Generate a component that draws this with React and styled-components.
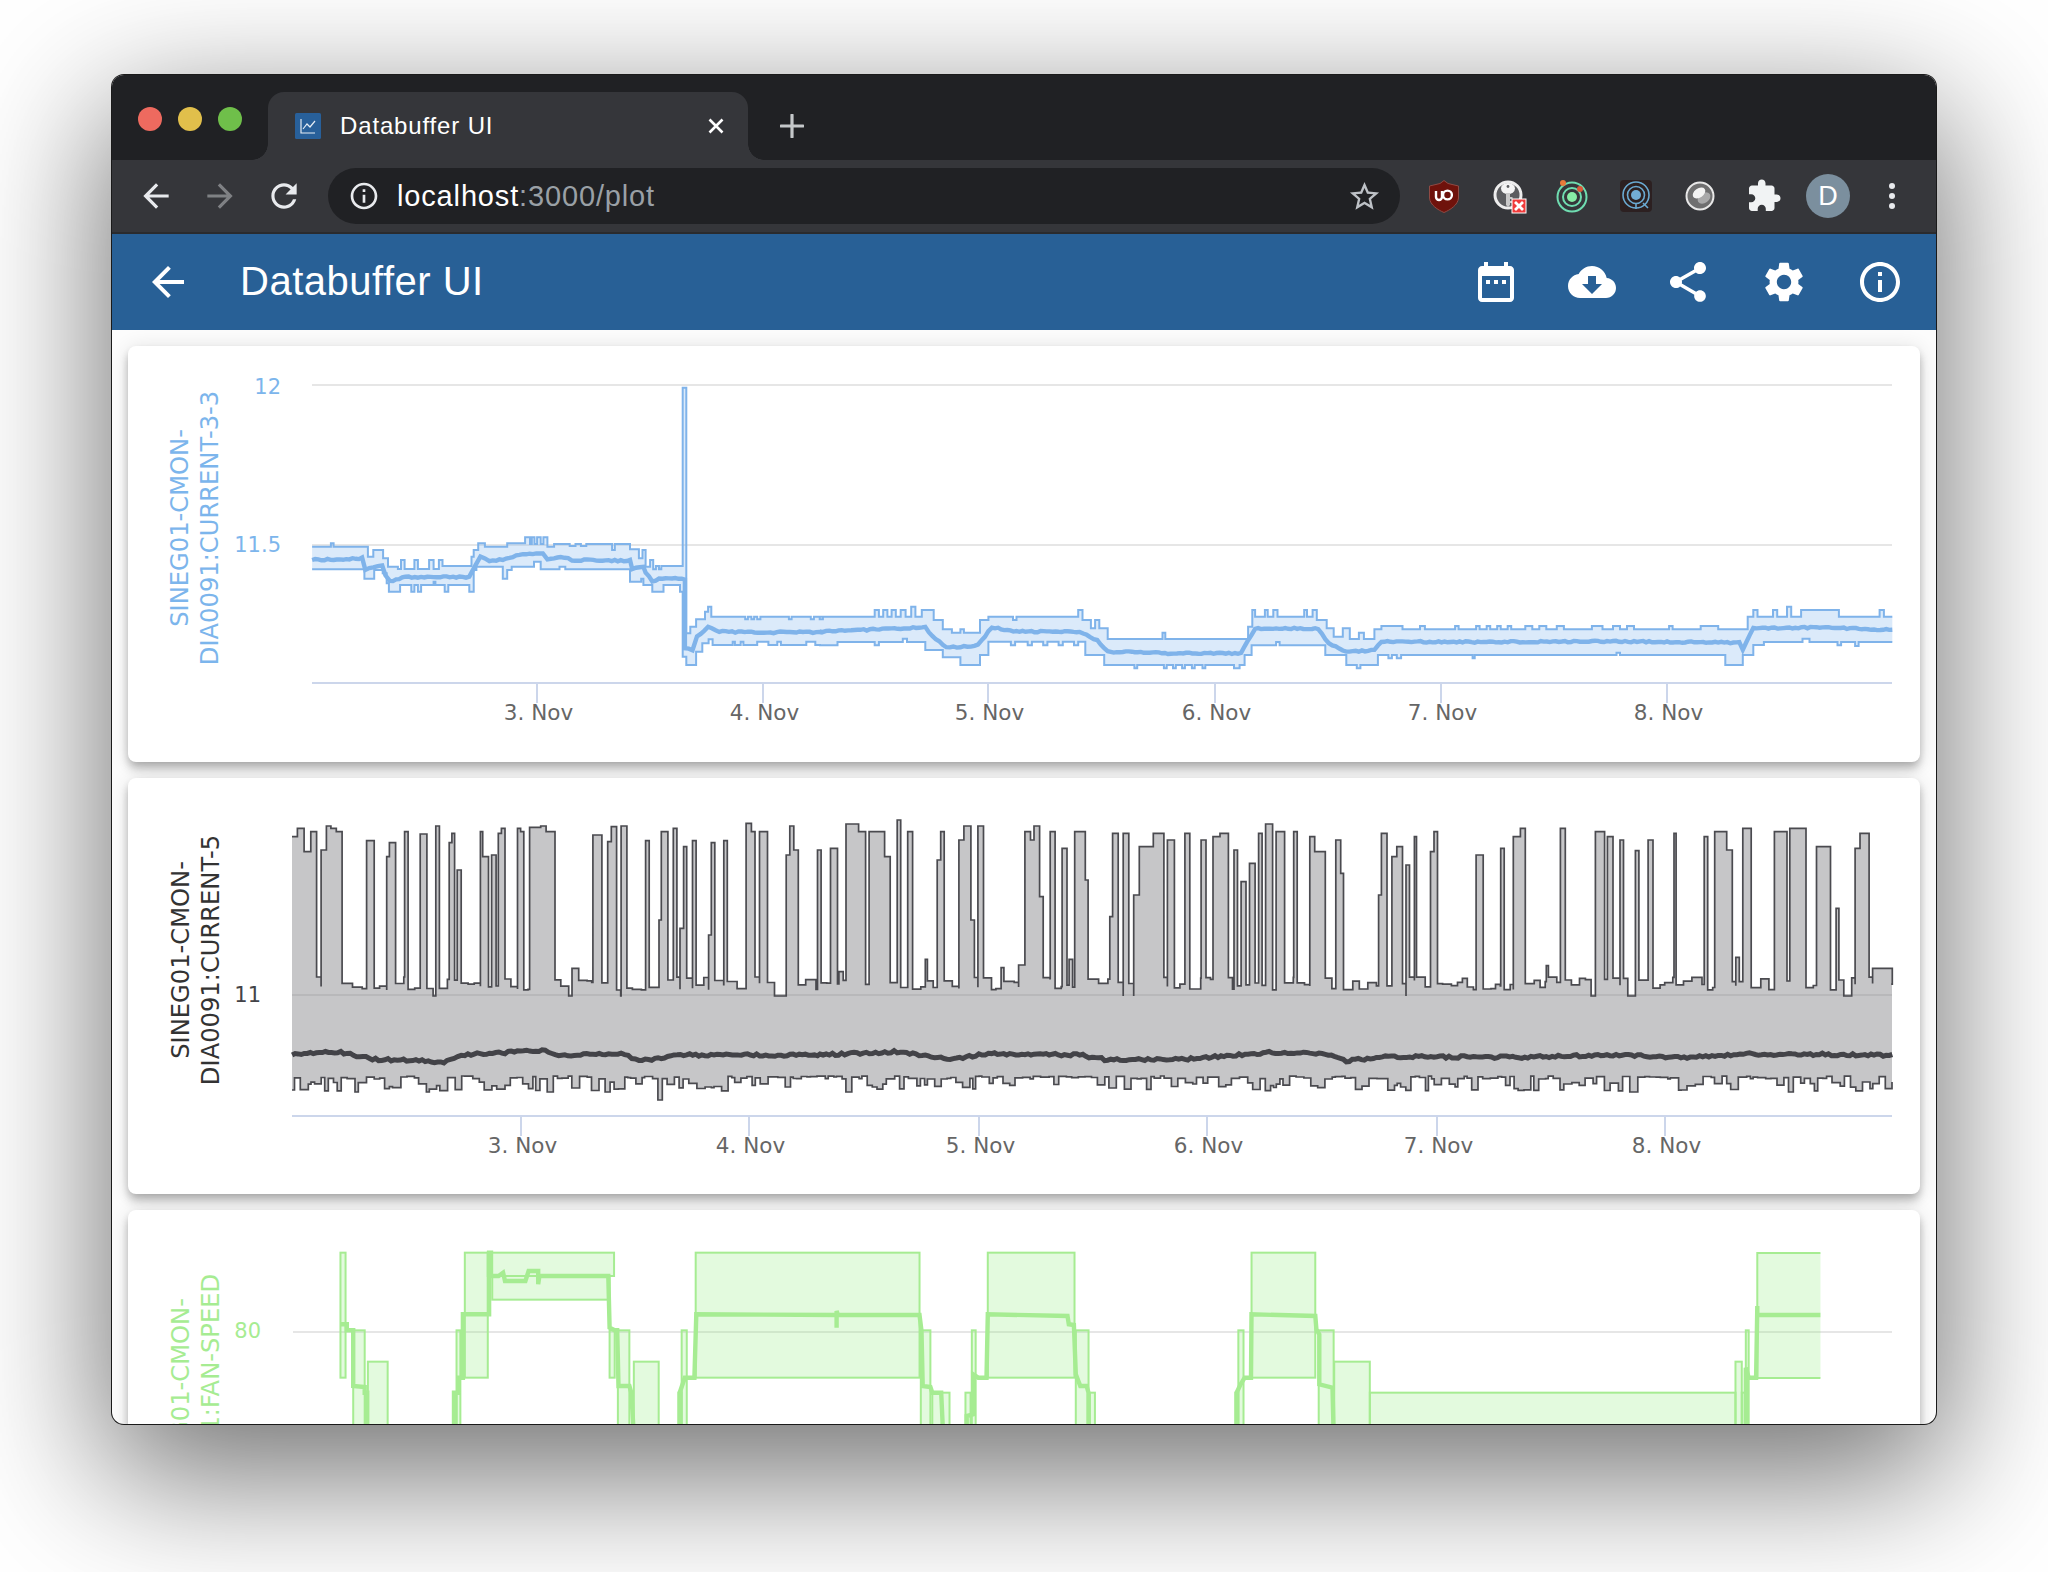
import React from 'react';
import styled, { createGlobalStyle } from 'styled-components';

const Global = createGlobalStyle`
  html, body { margin: 0; padding: 0; background: #fff; }
  body { font-family: "Liberation Sans", Arial, sans-serif; }
  #root { width: 2048px; height: 1572px; overflow: hidden; }
`;

const Page = styled.div`
  width: 2048px;
  height: 1572px;
  padding: 75px 0 0 112px;
  box-sizing: border-box;
  background: #fff;
  overflow: hidden;
`;
const Win = styled.div`
  width: 1824px;
  height: 1349px;
  border-radius: 12px;
  overflow: hidden;
  background: #fcfcfc;
  box-shadow: 0 0 0 1px #1a1a1a, 0 44px 140px 8px rgba(0, 0, 0, 0.56);
`;
const TabStrip = styled.div`
  height: 85px;
  background: #202124;
  display: flex;
  padding-left: 26px;
`;
const Lights = styled.div`
  display: flex;
  gap: 16px;
  margin-top: 32px;
  align-self: flex-start;
`;
const Light = styled.span`
  width: 24px;
  height: 24px;
  border-radius: 50%;
  background: ${(p) => p.$c};
`;
const Tab = styled.div`
  position: relative;
  width: 480px;
  height: 68px;
  margin-top: 17px;
  margin-left: 26px;
  padding: 0 24px 0 27px;
  box-sizing: border-box;
  background: #35363a;
  border-radius: 16px 16px 0 0;
  display: flex;
  align-items: center;
  gap: 19px;
  &::before, &::after {
    content: '';
    position: absolute;
    bottom: 0;
    width: 16px;
    height: 16px;
  }
  &::before { left: -16px; background: radial-gradient(circle at 0 0, #202124 15.5px, #35363a 16px); }
  &::after { right: -16px; background: radial-gradient(circle at 100% 0, #202124 15.5px, #35363a 16px); }
`;
const Favicon = styled.svg`
  width: 26px;
  height: 26px;
  flex: none;
`;
const TabTitle = styled.span`
  flex: 1;
  color: #fff;
  font-size: 24px;
  letter-spacing: 0.85px;
`;
const TabIcon = styled.svg`
  flex: none;
  display: block;
`;
const NewTab = styled.svg`
  margin: 39px 0 0 32px;
  width: 24px;
  height: 24px;
  flex: none;
`;
const Toolbar = styled.div`
  height: 72px;
  background: #35363a;
  border-bottom: 2px solid #2a2b2e;
  display: flex;
  align-items: center;
  padding: 0 12px;
`;
const ToolBtn = styled.div`
  width: 64px;
  height: 48px;
  flex: none;
  display: flex;
  align-items: center;
  justify-content: center;
`;
const Omnibox = styled.div`
  width: 1072px;
  height: 56px;
  margin: 0 12px;
  flex: none;
  border-radius: 28px;
  background: #202124;
  display: flex;
  align-items: center;
  padding: 0 18px 0 20px;
  box-sizing: border-box;
  gap: 17px;
`;
const Url = styled.span`
  flex: 1;
  color: #fff;
  font-size: 29px;
  letter-spacing: 0.85px;
  span { color: #9aa0a6; }
`;
const Avatar = styled.span`
  width: 44px;
  height: 44px;
  border-radius: 50%;
  background: #7b8f9e;
  color: #fff;
  font-size: 27px;
  display: flex;
  align-items: center;
  justify-content: center;
`;
const AppBar = styled.div`
  height: 96px;
  background: #286096;
  display: flex;
  align-items: center;
  padding: 0 32px;
  gap: 48px;
  position: relative;
`;
const AppTitle = styled.h1`
  margin: -2px 0 0;
  flex: 1;
  color: #fff;
  font-size: 40px;
  font-weight: 400;
  letter-spacing: 0.5px;
  line-height: 1;
`;
const AppIcon = styled.svg`
  width: 48px;
  height: 48px;
  fill: #fff;
  flex: none;
`;
const Content = styled.main`
  padding: 16px;
  display: flex;
  flex-direction: column;
  gap: 16px;
`;
const Card = styled.section`
  height: 416px;
  flex: none;
  background: #fff;
  border-radius: 8px;
  box-shadow: 0 4px 8px -2px rgba(0,0,0,.2), 0 8px 10px rgba(0,0,0,.14), 0 2px 20px rgba(0,0,0,.12);
  overflow: hidden;
`;
const ChartSvg = styled.svg`
  display: block;
  width: 1792px;
  height: 416px;
`;
const AxisTitle = styled.text`
  font-family: "DejaVu Sans", sans-serif;
  font-size: 24.2px;
  text-anchor: middle;
  fill: ${(p) => p.$c};
`;
const YLabel = styled.text`
  font-family: "DejaVu Sans", sans-serif;
  font-size: 21px;
  text-anchor: end;
  dominant-baseline: central;
  fill: ${(p) => p.$c};
`;
const XLabel = styled.text`
  font-family: "DejaVu Sans", sans-serif;
  font-size: 21.5px;
  text-anchor: middle;
  dominant-baseline: central;
  fill: #666;
`;

const BLUE = '#7fb3ea', DARK = '#4a4a4f', GREEN = '#a6ec92';

function rng(seed) {
  let s = seed;
  return () => {
    s = (s * 16807) % 2147483647;
    return s / 2147483647;
  };
}
const stepPath = (pts) => {
  let d = `M${pts[0][0].toFixed(1)} ${pts[0][1].toFixed(1)}`;
  for (let i = 1; i < pts.length; i++) d += `H${pts[i][0].toFixed(1)}V${pts[i][1].toFixed(1)}`;
  return d;
};
const areaPath = (up, lo) => {
  let d = stepPath(up);
  const l = lo[lo.length - 1];
  d += `H${l[0].toFixed(1)}V${l[1].toFixed(1)}`;
  for (let i = lo.length - 1; i > 0; i--) d += `H${lo[i][0].toFixed(1)}V${lo[i - 1][1].toFixed(1)}`;
  return d + `H${lo[0][0].toFixed(1)}Z`;
};
const linePath = (pts) => 'M' + pts.map((p) => `${p[0].toFixed(1)} ${p[1].toFixed(1)}`).join('L');
const jitterLine = (pts, seed, amp) => {
  const r = rng(seed);
  const out = [pts[0]];
  for (let i = 1; i < pts.length; i++) {
    const [a, b] = [pts[i - 1], pts[i]];
    const n = Math.max(1, Math.floor((b[0] - a[0]) / 3));
    for (let k = 1; k <= n; k++) {
      const t = k / n;
      out.push([a[0] + (b[0] - a[0]) * t, a[1] + (b[1] - a[1]) * t + (r() - 0.5) * amp]);
    }
  }
  return out;
};

/* blue chart, read from two crops */
const b3 = (a) => a.map(([x, y]) => [130 + x / 2.24, 340 + y / 3]);
const b7 = (a) => a.map(([x, y]) => [820 + x / 1.425, 540 + y / 3]);
const blueUp = [
  ...b3([[408,620],[450,610],[456,620],[533,650],[545,630],[567,655],[578,680],[600,687],[607,660],[615,687],[637,660],[645,687],[670,660],[680,687],[692,660],[700,678],[765,650],[770,630],[780,610],[795,620],[845,610],[885,592],[896,612],[900,592],[906,612],[912,592],[920,612],[926,592],[935,620],[950,612],[985,618],[998,612],[1010,618],[1022,612],[1080,630],[1086,612],[1120,628],[1140,655],[1148,630],[1155,680],[1165,660],[1172,688],[1178,678],[1185,688],[1190,678],[1238,143],[1246,880],[1255,860],[1268,838],[1288,815],[1295,800],[1302,830],[1378,838],[1384,830],[1392,838],[1398,830],[1405,838],[1412,830],[1476,838],[1482,830],[1525,838],[1532,830],[1545,838],[1552,830]]),
  ...b7([[0,230],[78,210],[84,230],[90,210],[96,230],[102,210],[108,230],[115,210],[122,230],[130,200],[136,230],[145,210],[162,240],[175,268],[188,278],[200,268],[205,278],[228,240],[240,230],[275,240],[280,230],[368,210],[374,240],[386,265],[392,240],[398,265],[410,297],[488,278],[492,297],[610,260],[616,210],[620,230],[634,210],[638,230],[646,210],[652,230],[690,210],[694,230],[702,210],[708,240],[722,265],[732,290],[745,265],[755,297],[768,278],[775,297],[790,268],[800,258],[830,268],[855,258],[862,268],[905,258],[910,268],[935,258],[940,268],[950,258],[955,268],[965,258],[970,268],[980,258],[985,268],[1005,258],[1015,268],[1025,258],[1035,268],[1050,258],[1060,268],[1100,258],[1115,268],[1130,258],[1140,268],[1150,258],[1160,268],[1210,258],[1215,268],[1255,258],[1280,268],[1322,230],[1330,210],[1336,230],[1358,210],[1364,230],[1378,200],[1384,230],[1398,210],[1452,230],[1510,210],[1516,230],[1528,230]]),
];
const blueLo = [
  ...b3([[408,688],[525,716],[547,690],[566,700],[575,730],[580,755],[605,735],[630,755],[637,735],[645,755],[652,735],[680,725],[684,735],[705,755],[713,735],[760,755],[770,690],[776,680],[835,716],[845,690],[855,680],[905,665],[920,688],[962,680],[975,688],[1120,725],[1145,716],[1150,735],[1170,755],[1195,735],[1232,755],[1238,950],[1246,975],[1268,935],[1282,910],[1296,898],[1305,915],[1350,905],[1355,915],[1368,905],[1374,915],[1405,905],[1430,915],[1450,905],[1458,915],[1515,905],[1535,915]]),
  ...b7([[0,316],[25,306],[78,316],[84,306],[118,296],[124,306],[150,330],[175,352],[200,375],[228,345],[240,305],[272,316],[278,305],[296,316],[302,305],[318,316],[324,305],[340,316],[346,305],[362,316],[368,305],[378,345],[405,375],[448,385],[452,375],[490,385],[494,375],[503,385],[507,375],[516,385],[520,375],[530,385],[534,375],[545,385],[549,375],[590,385],[598,375],[605,345],[615,316],[650,306],[655,316],[720,345],[750,375],[765,385],[770,375],[795,345],[810,355],[815,345],[822,355],[828,345],[930,355],[933,345],[1135,338],[1140,345],[1290,375],[1315,345],[1330,315],[1345,306],[1400,296],[1410,306],[1450,316],[1455,306],[1475,318],[1480,306],[1528,306]]),
];
const blueMean = jitterLine([
  ...b3([[408,660],[470,658],[520,655],[527,690],[545,682],[565,678],[572,705],[582,725],[610,712],[680,710],[760,712],[772,680],[785,650],[805,665],[850,655],[880,642],[925,640],[935,660],[965,650],[990,660],[1120,662],[1125,688],[1150,680],[1155,700],[1170,722],[1200,714],[1243,718],[1243,925],[1260,930],[1270,890],[1295,862],[1320,875],[1420,878],[1500,875],[1552,878]]),
  ...b7([[0,275],[80,268],[150,262],[160,290],[180,320],[200,322],[225,315],[245,262],[280,275],[370,275],[395,300],[410,335],[500,340],[600,340],[620,265],[710,265],[725,310],[750,335],[790,330],[800,305],[950,306],[1130,304],[1310,308],[1315,330],[1330,265],[1420,262],[1528,270]]),
], 17, 1.6);

/* dark chart */
const z4 = (x) => 130 + x / 2.24;
const z8 = (x) => 820 + x / 1.425;
const y4 = (y) => 790 + y / 3;
const y8 = (y) => 800 + y / 3;
const dark = [
  ...[[363,375,140],[375,390,115],[390,405,185],[405,418,125],[428,440,180],[440,450,108],[450,462,115],[462,475,125],[530,547,152],[575,581,200],[581,595,158],[615,623,125],[650,665,132],[685,693,108],[715,721,158],[721,727,130],[733,742,240],[785,790,125],[790,803,200],[810,820,195],[825,832,130],[832,840,115],[868,875,115],[875,882,125],[895,920,112],[920,932,108],[932,952,125],[990,1005,535],[1037,1057,135],[1070,1078,155],[1078,1090,110],[1100,1113,108],[1155,1163,152],[1185,1190,390],[1190,1205,125],[1217,1225,115],[1232,1240,415],[1240,1247,170],[1260,1268,152],[1296,1302,435],[1302,1310,158],[1330,1338,152],[1380,1392,100],[1392,1400,125],[1410,1428,125],[1470,1478,195],[1478,1487,108],[1487,1497,180],[1540,1548,180]].map(([a, b, t]) => [z4(a), z4(b), y4(t)]),
  ...[[15,25,145],[27,33,515],[37,55,72],[55,65,95],[70,92,95],[92,100,170],[110,115,60],[125,132,95],[150,153,478],[167,172,180],[172,177,95],[198,205,120],[205,215,78],[215,220,360],[225,233,78],[258,262,503],[283,292,495],[292,300,95],[300,305,120],[305,313,78],[313,318,290],[328,335,95],[345,352,145],[355,360,478],[363,378,95],[378,382,240],[413,417,350],[417,425,100],[432,440,100],[447,455,285],[455,475,140],[475,490,100],[495,505,120],[520,527,100],[543,550,120],[560,570,110],[570,582,100],[590,595,150],[600,607,245],[612,620,190],[625,630,100],[635,645,72],[650,662,95],[675,680,95],[698,705,110],[705,720,155],[735,742,120],[742,746,220],[796,800,285],[800,808,100],[815,822,170],[822,830,140],[835,840,195],[847,850,110],[870,875,155],[875,880,95],[935,945,165],[970,975,145],[988,998,110],[998,1005,85],[1035,1038,497],[1055,1062,85],[1105,1118,95],[1122,1130,110],[1140,1145,120],[1162,1167,152],[1180,1187,120],[1217,1220,100],[1260,1265,110],[1275,1292,95],[1292,1300,150],[1305,1310,472],[1315,1327,85],[1360,1378,95],[1382,1405,85],[1420,1440,140],[1448,1452,325],[1475,1482,145],[1482,1495,100],[1500,1528,505]].map(([a, b, t]) => [z8(a), z8(b), y8(t)]),
];
function buildDarkUp() {
  const r = rng(91);
  const pts = [[292, dark[0][2]]];
  let x = 292;
  dark.forEach(([a, b, t], idx) => {
    while (a - x > 3) {
      const w = Math.min(4 + r() * 7, a - x);
      x += w;
      const q = r();
      pts.push([x, q > 0.93 ? 996 : 977 + r() * 13]);
    }
    if (idx) pts.push([a, t]);
    pts.push([b, idx + 1 < dark.length && dark[idx + 1][0] <= b + 1 ? dark[idx + 1][2] : 977 + r() * 13]);
    x = b;
  });
  pts.push([1892, 985]);
  return pts;
}
const darkUp = buildDarkUp();
function buildDarkLo() {
  const r = rng(337);
  const pts = [[292, 1090]];
  let x = 292;
  let y = 1077;
  while (x < 1892) {
    x = Math.min(1892, x + 2.5 + r() * 6);
    const q = r();
    y = q < 0.55 ? 1076 + r() * 3 : 1082 + r() * 9;
    if (r() > 0.97) y = 1092;
    if (Math.abs(x - 657) < 3) y = 1100;
    pts.push([x, y]);
  }
  return pts;
}
const darkLo = buildDarkLo();
const meanAnchors = [
  ...[[363,795],[465,785],[550,808],[710,815],[750,795],[930,780],[960,795],[1100,790],[1140,812],[1240,795],[1540,795]].map(([a, b]) => [z4(a), y4(b)]),
  ...[[0,765],[110,755],[190,778],[240,760],[370,765],[410,780],[520,778],[640,757],[720,762],[750,782],[810,770],[1000,772],[1130,765],[1240,772],[1320,762],[1528,765]].map(([a, b]) => [z8(a), y8(b)]),
];
const darkMean = jitterLine(meanAnchors, 55, 2.6);

/* green chart */
const g5 = (a) => a.map(([x, y]) => [130 + x / 1.568, 1200 + y / 3]);
const g6 = (a) => a.map(([x, y]) => [1100 + x / 1.742, 1200 + y / 3]);
const r5 = (x0, x1, t, b = 800) => [130 + x0 / 1.568, 130 + x1 / 1.568, 1200 + t / 3, 1200 + b / 3];
const r6 = (x0, x1, t, b = 800) => [1100 + x0 / 1.742, 1100 + x1 / 1.742, 1200 + t / 3, 1200 + b / 3];
const greenRects = [
  r5(330,338,155,530), r5(350,368,388), r5(373,404,482), r5(508,512,575), r5(512,518,388),
  r5(525,561,155,530), r5(561,759,155,225), r5(568,752,225,296), r5(752,760,388,530), r5(765,783,388),
  r5(790,829,482), r5(860,865,575), r5(865,873,388), r5(887,1238,155,530), r5(1240,1255,388),
  r5(1258,1285,575), r5(1310,1318,575), r5(1320,1326,388), r5(1345,1481,155,530), r5(1483,1503,388), r5(1505,1513,575),
  r6(236,241,575), r6(241,250,388), r6(264,375,155,530), r6(381,407,388), r6(408,470,482),
  r6(470,1107,575), r6(1107,1118,482), r6(1118,1125,575), r6(1125,1130,388),
];
const greenMean = [
  g5([[330,370],[340,370],[340,388],[350,388],[350,555],[368,558],[368,575],[372,575],[372,700]]),
  g5([[508,700],[508,575],[515,575],[515,530],[522,530],[522,340],[561,340],[563,340],[563,155],[566,155],[566,225],[578,225],[585,215],[588,240],[620,240],[625,210],[640,210],[640,250],[642,225],[750,225],[752,380],[760,388],[764,388],[766,555],[783,555],[786,575],[790,700]]),
  g5([[862,700],[862,575],[870,530],[885,530],[888,340],[1108,342],[1108,380],[1108,330],[1110,342],[1238,342],[1241,390],[1243,555],[1255,558],[1258,575],[1272,575],[1275,700]]),
  g5([[1312,700],[1312,645],[1322,640],[1322,520],[1330,530],[1343,530],[1345,340],[1470,345],[1472,370],[1480,372],[1483,520],[1490,555],[1500,555],[1503,575],[1503,700]]),
  g6([[238,700],[238,575],[245,550],[252,530],[263,530],[264,340],[375,345],[377,385],[382,400],[382,550],[405,560],[407,700]]),
  g6([[1125,700],[1125,500],[1130,530],[1143,530],[1145,315],[1145,342],[1255,342]]),
];
const gLastX0 = 1100 + 1145 / 1.742;
const gLastX1 = 1100 + 1255 / 1.742;

const ChartAxis = ({ top, left, ticks, labelY }) => (
  <>
    <line x1={left} x2="1892" y1={top} y2={top} stroke="#ccd6eb" strokeWidth="2" />
    {ticks.map(([x, t]) => (
      <g key={t}>
        <line x1={x} x2={x} y1={top} y2={top + 20} stroke="#ccd6eb" strokeWidth="2" />
        <XLabel x={x + 1.5} y={labelY}>{t}</XLabel>
      </g>
    ))}
  </>
);
const days = ['3. Nov', '4. Nov', '5. Nov', '6. Nov', '7. Nov', '8. Nov'];

const BlueChart = () => (
  <ChartSvg viewBox="128 346 1792 416">
    <line x1="312" x2="1892" y1="385" y2="385" stroke="#e6e6e6" strokeWidth="2" />
    <line x1="312" x2="1892" y1="545" y2="545" stroke="#e6e6e6" strokeWidth="2" />
    <path d={areaPath(blueUp, blueLo)} fill="#7cb5ec" fillOpacity="0.28" />
    <path d={stepPath(blueUp)} fill="none" stroke={BLUE} strokeWidth="2" />
    <path d={stepPath(blueLo)} fill="none" stroke={BLUE} strokeWidth="2" />
    <path d={linePath(blueMean)} fill="none" stroke={BLUE} strokeWidth="4.4" />
    <ChartAxis top={683} left={312} labelY={712} ticks={days.map((t, i) => [[537, 763, 988, 1215, 1441, 1667][i], t])} />
    <YLabel x={281} y={387} $c="#7cb5ec">12</YLabel>
    <YLabel x={281} y={545} $c="#7cb5ec">11.5</YLabel>
    <AxisTitle $c="#7cb5ec" transform="translate(188 528) rotate(-90)">SINEG01-CMON-</AxisTitle>
    <AxisTitle $c="#7cb5ec" transform="translate(218 528) rotate(-90)">DIA0091:CURRENT-3-3</AxisTitle>
  </ChartSvg>
);
const DarkChart = () => (
  <ChartSvg viewBox="128 778 1792 416">
    <path d={areaPath(darkUp, darkLo)} fill="#434348" fillOpacity="0.3" />
    <line x1="292" x2="1892" y1="995" y2="995" stroke="#b8b8ba" strokeWidth="2" />
    <path d={stepPath(darkUp)} fill="none" stroke={DARK} strokeWidth="1.7" />
    <path d={stepPath(darkLo)} fill="none" stroke={DARK} strokeWidth="1.7" />
    <path d={linePath(darkMean)} fill="none" stroke="#434348" strokeWidth="5" />
    <ChartAxis top={1116} left={292} labelY={1145} ticks={days.map((t, i) => [[521, 749, 979, 1207, 1437, 1665][i], t])} />
    <YLabel x={261} y={995} $c="#434348">11</YLabel>
    <AxisTitle $c="#333" transform="translate(189 960) rotate(-90)">SINEG01-CMON-</AxisTitle>
    <AxisTitle $c="#333" transform="translate(219 960) rotate(-90)">DIA0091:CURRENT-5</AxisTitle>
  </ChartSvg>
);
const GreenChart = () => (
  <ChartSvg viewBox="128 1210 1792 416">
    <line x1="293" x2="1892" y1="1332" y2="1332" stroke="#e6e6e6" strokeWidth="2" />
    {greenRects.map(([a, b, t, l], i) => (
      <rect key={i} x={a} y={t + 1} width={b - a} height={l - t} fill="#90ed7d" fillOpacity="0.25" stroke={GREEN} strokeWidth="2" />
    ))}
    <rect x={gLastX0} y={1253} width={gLastX1 - gLastX0} height={125} fill="#90ed7d" fillOpacity="0.25" />
    <path d={`M${gLastX1} 1253H${gLastX0}V1378H${gLastX1}`} fill="none" stroke={GREEN} strokeWidth="2" />
    {greenMean.map((s, i) => (
      <path key={i} d={linePath(s.map(([x, y]) => [x, y + 1]))} fill="none" stroke={GREEN} strokeWidth="4.4" />
    ))}
    <YLabel x={261} y={1331} $c="#a6ec92">80</YLabel>
    <AxisTitle $c="#a6ec92" transform="translate(189 1397) rotate(-90)">SINEG01-CMON-</AxisTitle>
    <AxisTitle $c="#a6ec92" transform="translate(219 1397) rotate(-90)">DIA0091:FAN-SPEED</AxisTitle>
  </ChartSvg>
);

const ICONS = {
  back: 'M20 11H7.83l5.59-5.59L12 4l-8 8 8 8 1.41-1.41L7.83 13H20v-2z',
  forward: 'M12 4l-1.41 1.41L16.17 11H4v2h12.17l-5.58 5.59L12 20l8-8z',
  reload: 'M17.65 6.35C16.2 4.9 14.21 4 12 4c-4.42 0-7.99 3.58-7.99 8s3.57 8 7.99 8c3.73 0 6.84-2.55 7.73-6h-2.08c-.82 2.33-3.04 4-5.65 4-3.31 0-6-2.69-6-6s2.69-6 6-6c1.66 0 3.14.69 4.22 1.78L13 11h7V4l-2.35 2.35z',
  date: 'M9 11H7v2h2v-2zm4 0h-2v2h2v-2zm4 0h-2v2h2v-2zm2-7h-1V2h-2v2H8V2H6v2H5c-1.11 0-1.99.9-1.99 2L3 20c0 1.1.89 2 2 2h14c1.1 0 2-.9 2-2V6c0-1.1-.9-2-2-2zm0 16H5V9h14v11z',
  cloud: 'M19.35 10.04C18.67 6.59 15.64 4 12 4 9.11 4 6.6 5.64 5.35 8.04 2.34 8.36 0 10.91 0 14c0 3.31 2.69 6 6 6h13c2.76 0 5-2.24 5-5 0-2.64-2.05-4.78-4.65-4.96zM17 13l-5 5-5-5h3V9h4v4h3z',
  share: 'M18 16.08c-.76 0-1.44.3-1.96.77L8.91 12.7c.05-.23.09-.46.09-.7s-.04-.47-.09-.7l7.05-4.11c.54.5 1.25.81 2.04.81 1.66 0 3-1.34 3-3s-1.34-3-3-3-3 1.34-3 3c0 .24.04.47.09.7L8.04 9.81C7.5 9.31 6.79 9 6 9c-1.66 0-3 1.34-3 3s1.34 3 3 3c.79 0 1.5-.31 2.04-.81l7.12 4.16c-.05.21-.08.43-.08.65 0 1.61 1.31 2.92 2.92 2.92 1.61 0 2.92-1.31 2.92-2.92s-1.31-2.92-2.92-2.92z',
  gear: 'M19.14 12.94c.04-.3.06-.61.06-.94 0-.32-.02-.64-.07-.94l2.03-1.58c.18-.14.23-.41.12-.61l-1.92-3.32c-.12-.22-.37-.29-.59-.22l-2.39.96c-.5-.38-1.03-.7-1.62-.94l-.36-2.54c-.04-.24-.24-.41-.48-.41h-3.84c-.24 0-.43.17-.47.41l-.36 2.54c-.59.24-1.13.57-1.62.94l-2.39-.96c-.22-.08-.47 0-.59.22L2.74 8.87c-.12.21-.08.47.12.61l2.03 1.58c-.05.3-.09.63-.09.94s.02.64.07.94l-2.03 1.58c-.18.14-.23.41-.12.61l1.92 3.32c.12.22.37.29.59.22l2.39-.96c.5.38 1.03.7 1.62.94l.36 2.54c.05.24.24.41.48.41h3.84c.24 0 .44-.17.47-.41l.36-2.54c.59-.24 1.13-.56 1.62-.94l2.39.96c.22.08.47 0 .59-.22l1.92-3.32c.12-.22.07-.47-.12-.61l-2.01-1.58zM12 15.6c-1.98 0-3.6-1.62-3.6-3.6s1.62-3.6 3.6-3.6 3.6 1.62 3.6 3.6-1.62 3.6-3.6 3.6z',
  info: 'M11 7h2v2h-2zm0 4h2v6h-2zm1-9C6.48 2 2 6.48 2 12s4.48 10 10 10 10-4.48 10-10S17.52 2 12 2zm0 18c-4.41 0-8-3.59-8-8s3.59-8 8-8 8 3.59 8 8-3.59 8-8 8z',
  puzzle: 'M20.5 11H19V7c0-1.1-.9-2-2-2h-4V3.5C13 2.12 11.88 1 10.5 1S8 2.12 8 3.5V5H4c-1.1 0-1.99.9-1.99 2v3.8H3.5c1.49 0 2.7 1.21 2.7 2.7s-1.21 2.7-2.7 2.7H2V20c0 1.1.9 2 2 2h3.8v-1.5c0-1.49 1.21-2.7 2.7-2.7 1.49 0 2.7 1.21 2.7 2.7V22H17c1.1 0 2-.9 2-2v-4h1.5c1.38 0 2.5-1.12 2.5-2.5S21.88 11 20.5 11z',
};
const Ico = ({ n, s = 36, c = '#e8eaed' }) => (
  <svg width={s} height={s} viewBox="0 0 24 24" fill={c}><path d={ICONS[n]} /></svg>
);

const UBlock = () => (
  <svg width="30" height="33" viewBox="0 0 30 33">
    <path d="M15 .5 L19 3.5 L29.5 6 V18 C29 25 21 30 15 32.5 C9 30 1 25 .5 18 V6 L11 3.5Z" fill="#6f120b" stroke="#8f4a44" strokeWidth="1" />
    <path d="M7 11v6a3 3 0 0 0 6 0v-6" fill="none" stroke="#fff" strokeWidth="2.4" />
    <circle cx="18.5" cy="15" r="4.4" fill="none" stroke="#fff" strokeWidth="2.4" />
  </svg>
);
const KeyExt = () => (
  <svg width="36" height="36" viewBox="0 0 36 36" style={{ marginLeft: 6, marginTop: 3 }}>
    <circle cx="15" cy="15" r="13" fill="#5c5d60" stroke="#ededed" strokeWidth="3" />
    <ellipse cx="15" cy="8.5" rx="7" ry="5.5" fill="#f4f4f4" />
    <circle cx="15" cy="6.5" r="1.4" fill="#5c5d60" />
    <path d="M13 13h4v12l-2 2-2-2z" fill="#c9c9c9" />
    <path d="M17 17h2.5v2H17zM17 21h2.5v2H17z" fill="#c9c9c9" />
    <rect x="19" y="19" width="14" height="14" fill="#f03b3b" stroke="#fff" strokeWidth="1" />
    <path d="M22 22l8 8M30 22l-8 8" stroke="#fff" strokeWidth="2.8" />
  </svg>
);
const OrbitExt = () => (
  <svg width="36" height="36" viewBox="0 0 36 36">
    <circle cx="18" cy="19" r="14.5" fill="none" stroke="#6fdcb0" strokeWidth="2" />
    <circle cx="18" cy="19" r="9" fill="none" stroke="#6fdcb0" strokeWidth="2" />
    <circle cx="18" cy="19" r="5" fill="#86eda6" />
    <circle cx="9" cy="5" r="3" fill="#e8793a" />
    <circle cx="26" cy="11" r="3" fill="#d9593a" />
  </svg>
);
const TargetExt = () => (
  <svg width="32" height="32" viewBox="0 0 32 32">
    <rect width="32" height="32" rx="4" fill="#2c2021" />
    <circle cx="16" cy="15" r="13" fill="none" stroke="#6aa8d0" strokeWidth="1.6" />
    <circle cx="16" cy="15" r="8.5" fill="none" stroke="#6aa8d0" strokeWidth="1.6" />
    <circle cx="16" cy="15" r="5" fill="#72add4" />
    <path d="M16 24v5M23 23l5 5" stroke="#6aa8d0" strokeWidth="1.6" />
  </svg>
);
const LensExt = () => (
  <svg width="30" height="30" viewBox="0 0 30 30">
    <circle cx="15" cy="15" r="13.5" fill="#6f6f70" stroke="#e8e8e8" strokeWidth="2" />
    <ellipse cx="19" cy="17" rx="7" ry="5" fill="#a9a9aa" transform="rotate(-35 19 17)" />
    <ellipse cx="14" cy="12" rx="7" ry="4.6" fill="#f3f3f3" transform="rotate(-35 14 12)" />
  </svg>
);
const Dots = () => (
  <svg width="10" height="30" viewBox="0 0 10 30" fill="#e8eaed">
    <circle cx="5" cy="5" r="3" />
    <circle cx="5" cy="15" r="3" />
    <circle cx="5" cy="25" r="3" />
  </svg>
);

export default function App() {
  return (
    <>
      <Global />
      <Page>
        <Win>
          <TabStrip>
            <Lights>
              <Light $c="#ee6a5f" />
              <Light $c="#e1bf4b" />
              <Light $c="#6fbf4a" />
            </Lights>
            <Tab>
              <Favicon viewBox="0 0 26 26">
                <rect width="26" height="26" rx="1.5" fill="#28609a" />
                <path d="M6 6v14h14M8 16l4-5 3 3 5-6" fill="none" stroke="#e4ecf4" strokeWidth="1.2" />
              </Favicon>
              <TabTitle>Databuffer UI</TabTitle>
              <TabIcon width="16" height="16" viewBox="0 0 16 16">
                <path d="M1.5 1.5l13 13M14.5 1.5l-13 13" stroke="#fff" strokeWidth="2.6" />
              </TabIcon>
            </Tab>
            <NewTab viewBox="0 0 24 24">
              <path d="M12 1v22M1 12h22" stroke="#c4c7c9" strokeWidth="3.2" strokeLinecap="round" />
            </NewTab>
          </TabStrip>
          <Toolbar>
            <ToolBtn><Ico n="back" s={38} /></ToolBtn>
            <ToolBtn><Ico n="forward" s={38} c="#7f8184" /></ToolBtn>
            <ToolBtn><Ico n="reload" s={38} /></ToolBtn>
            <Omnibox>
              <Ico n="info" s={32} />
              <Url>localhost<span>:3000/plot</span></Url>
              <svg width="35" height="35" viewBox="0 0 24 24" fill="#bdc1c6">
                <path d="M22 9.24l-7.19-.62L12 2 9.19 8.63 2 9.24l5.46 4.73L5.82 21 12 17.27 18.18 21l-1.63-7.03L22 9.24zM12 15.4l-3.76 2.27 1-4.28-3.32-2.88 4.38-.38L12 6.1l1.71 4.04 4.38.38-3.32 2.88 1 4.28L12 15.4z" />
              </svg>
            </Omnibox>
            <ToolBtn><UBlock /></ToolBtn>
            <ToolBtn><KeyExt /></ToolBtn>
            <ToolBtn><OrbitExt /></ToolBtn>
            <ToolBtn><TargetExt /></ToolBtn>
            <ToolBtn><LensExt /></ToolBtn>
            <ToolBtn><Ico n="puzzle" s={36} c="#f1f3f4" /></ToolBtn>
            <ToolBtn><Avatar>D</Avatar></ToolBtn>
            <ToolBtn><Dots /></ToolBtn>
          </Toolbar>
          <AppBar>
            <AppIcon viewBox="0 0 24 24"><path d={ICONS.back} /></AppIcon>
            <AppTitle>Databuffer UI</AppTitle>
            <AppIcon viewBox="0 0 24 24"><path d={ICONS.date} /></AppIcon>
            <AppIcon viewBox="0 0 24 24"><path d={ICONS.cloud} /></AppIcon>
            <AppIcon viewBox="0 0 24 24"><path d={ICONS.share} /></AppIcon>
            <AppIcon viewBox="0 0 24 24"><path d={ICONS.gear} /></AppIcon>
            <AppIcon viewBox="0 0 24 24"><path d={ICONS.info} /></AppIcon>
          </AppBar>
          <Content>
            <Card><BlueChart /></Card>
            <Card><DarkChart /></Card>
            <Card><GreenChart /></Card>
          </Content>
        </Win>
      </Page>
    </>
  );
}
